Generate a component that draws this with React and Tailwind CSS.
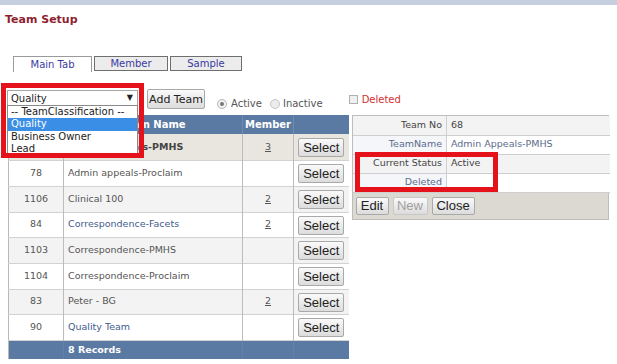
import React from 'react'

const rows = [
  { no: '68', name: 'Admin Appeals-PMHS', member: '3', bg: 'bg-[#e9e6e0]', bold: true, h: 'h-[26px]' },
  { no: '78', name: 'Admin appeals-Proclaim', member: '', bg: 'bg-white', h: 'h-[26px]' },
  { no: '1106', name: 'Clinical 100', member: '2', bg: 'bg-[#f3f3f3]', h: 'h-[26px]' },
  { no: '84', name: 'Correspondence-Facets', member: '2', bg: 'bg-white', link: true, h: 'h-[25px]' },
  { no: '1103', name: 'Correspondence-PMHS', member: '', bg: 'bg-[#f3f3f3]', h: 'h-[26px]' },
  { no: '1104', name: 'Correspondence-Proclaim', member: '', bg: 'bg-white', h: 'h-[26px]' },
  { no: '83', name: 'Peter - BG', member: '2', bg: 'bg-[#f3f3f3]', h: 'h-[25px]' },
  { no: '90', name: 'Quality Team', member: '', bg: 'bg-white', link: true, h: 'h-[26px]' },
]

function Btn({ children, className = '', disabled }) {
  return (
    <button
      className={
        "border border-[#a9a9a9] rounded-[2px] bg-gradient-to-b from-[#fafafa] to-[#dcdcdc] font-['Liberation_Sans',Arial,sans-serif] text-[13px] leading-none " +
        (disabled ? 'text-[#a0a0a0] border-[#c8c8c8] ' : 'text-[#222] ') +
        className
      }
    >
      {children}
    </button>
  )
}

export default function App() {
  return (
    <div className="relative w-[617px] h-[364px] bg-white overflow-hidden font-['DejaVu_Sans',Verdana,sans-serif] text-[9.5px] text-[#555]">
      <div className="h-[5px] bg-[#c5cfe0]" />
      <div className="pl-[5px] pt-[8px] text-[11px] leading-[13px] font-bold text-[#8e1f30]">Team Setup</div>

      {/* tabs */}
      <div className="flex gap-[2px] pl-[13px] mt-[30px] h-[16px] text-[#3a3aa0] text-[10px]">
        <div className="w-[79px] h-[16px] bg-white border border-b-0 border-[#9a9a9a] flex items-center justify-center">Main Tab</div>
        <div className="w-[74px] h-[15px] bg-[#ececec] border border-[#6f6f6f] flex items-center justify-center">Member</div>
        <div className="w-[72px] h-[15px] bg-[#ececec] border border-[#6f6f6f] flex items-center justify-center">Sample</div>
      </div>

      {/* toolbar */}
      <div className="flex items-start mt-[17px] pl-[7px] h-[20px]">
        <div className="mt-[1px] w-[131px] h-[16px] border border-[#a5a5a5] bg-white flex items-center justify-between pl-[3px] pr-[4px] text-[#222] text-[10px]">
          <span>Quality</span>
          <span className="text-[8px]">▼</span>
        </div>
        <Btn className="ml-[9px] w-[58px] h-[20px] !font-['DejaVu_Sans',Verdana,sans-serif] !text-[11px]">Add Team</Btn>
        <div className="ml-[12px] mt-[7px] flex items-center text-[#555] text-[10px]">
          <span className="w-[10px] h-[10px] rounded-full border border-[#b5b5b5] bg-[#f2f2f2] flex items-center justify-center">
            <span className="w-[4px] h-[4px] rounded-full bg-[#777]" />
          </span>
          <span className="ml-[4px]">Active</span>
          <span className="ml-[8px] w-[10px] h-[10px] rounded-full border border-[#c5c5c5] bg-[#ececec]" />
          <span className="ml-[3px]">Inactive</span>
        </div>
        <div className="ml-[26px] mt-[3px] flex items-center text-[10px]">
          <span className="w-[9px] h-[9px] border border-[#b0b0b0] bg-[#f0f0f0]" />
          <span className="ml-[4px] text-[#d03030]">Deleted</span>
        </div>
      </div>

      {/* content */}
      <div className="flex items-start mt-[6px] pl-[8px]">
        <table className="w-[340px] border-collapse table-fixed border-l border-[#b8b8b8]">
          <colgroup>
            <col className="w-[55px]" />
            <col className="w-[179px]" />
            <col className="w-[51px]" />
            <col className="w-[55px]" />
          </colgroup>
          <thead>
            <tr className="h-[19px] bg-[#5a7aa3] text-white font-bold text-[10px]">
              <th className="border-r border-[#6f8db3]">Team No</th>
              <th className="border-r border-[#6f8db3]">Team Name</th>
              <th className="border-r border-[#6f8db3]">Member</th>
              <th></th>
            </tr>
          </thead>
          <tbody>
            {rows.map((r) => (
              <tr key={r.no} className={r.h + ' ' + r.bg + ' border-b border-[#d2d2d2]'}>
                <td className="text-center border-r border-[#bcbcbc]">{r.no}</td>
                <td className={'pl-[4px] border-r border-[#bcbcbc] ' + (r.bold ? 'font-bold text-[#444] ' : '') + (r.link ? 'text-[#3f5b8e]' : '')}>{r.name}</td>
                <td className="text-center border-r border-[#bcbcbc]">{r.member && <span className="underline">{r.member}</span>}</td>
                <td className="text-center align-middle">
                  <Btn className="w-[46px] h-[19px] mt-[1px]">Select</Btn>
                </td>
              </tr>
            ))}
            <tr className="h-[19px] bg-[#5a7aa3] text-white font-bold">
              <td className="border-r border-[#6482a9]"></td>
              <td className="pl-[4px] border-r border-[#6482a9]">8 Records</td>
              <td className="border-r border-[#6482a9]"></td>
              <td></td>
            </tr>
          </tbody>
        </table>

        <div className="ml-[3px] w-[257px] border border-[#bdbdbd]">
          <table className="w-full border-collapse table-fixed">
            <colgroup>
              <col className="w-[94px]" />
              <col className="w-[163px]" />
            </colgroup>
            <tbody>
              <tr className="h-[19px] bg-[#f3f3f3] border-b border-[#cfcfcf]">
                <td className="text-right pr-[4px] border-r border-[#cfcfcf] text-[#444]">Team No</td>
                <td className="pl-[4px] text-[#444]">68</td>
              </tr>
              <tr className="h-[19px] bg-white border-b border-[#cfcfcf]">
                <td className="text-right pr-[4px] border-r border-[#cfcfcf] bg-[#f4f6fa] text-[#5b6b8c]">TeamName</td>
                <td className="pl-[4px] text-[#5b6b8c]">Admin Appeals-PMHS</td>
              </tr>
              <tr className="h-[19px] bg-[#f3f3f3] border-b border-[#cfcfcf]">
                <td className="text-right pr-[4px] border-r border-[#cfcfcf] text-[#444]">Current Status</td>
                <td className="pl-[4px] text-[#444]">Active</td>
              </tr>
              <tr className="h-[19px] bg-white border-b border-[#cfcfcf]">
                <td className="text-right pr-[4px] border-r border-[#cfcfcf] bg-[#f4f6fa] text-[#5b6b8c]">Deleted</td>
                <td></td>
              </tr>
            </tbody>
          </table>
          <div className="h-[26px] bg-[#dcd9d2] flex items-center gap-[4px] pl-[3px]">
            <Btn className="w-[33px] h-[18px]">Edit</Btn>
            <Btn className="w-[35px] h-[18px]" disabled>New</Btn>
            <Btn className="w-[43px] h-[18px]">Close</Btn>
          </div>
        </div>
      </div>

      {/* open dropdown list */}
      <div className="absolute left-[7px] top-[105px] w-[131px] h-[50px] bg-white border border-[#8a8a8a] text-[#222] text-[10px] leading-[12px]">
        <div className="pl-[3px] h-[12px]">-- TeamClassification --</div>
        <div className="pl-[3px] h-[13px] bg-[#3a8ee6] text-white">Quality</div>
        <div className="pl-[3px] h-[12px]">Business Owner</div>
        <div className="pl-[3px] h-[12px]">Lead</div>
      </div>

      {/* annotation boxes */}
      <div className="absolute left-[1px] top-[83px] w-[143px] h-[75px] border-[5px] border-[#e5121c]" />
      <div className="absolute left-[355px] top-[152px] w-[143px] h-[40px] border-[5px] border-[#e5121c]" />
    </div>
  )
}
